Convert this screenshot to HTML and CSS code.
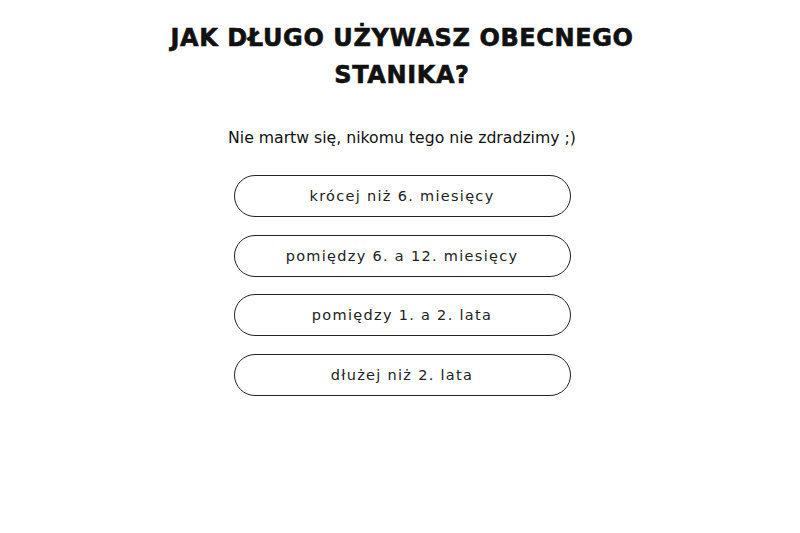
FILE: index.html
```html
<!DOCTYPE html>
<html lang="pl">
<head>
  <meta charset="UTF-8" />
  <meta name="viewport" content="width=device-width, initial-scale=1.0"/>
  <title>Quiz</title>
  <link rel="stylesheet" href="styles.css">
</head>
<body>
  <div class="question">
    <h2>JAK DŁUGO UŻYWASZ OBECNEGO<br>STANIKA?</h2>
    <p class="hint">Nie martw się, nikomu tego nie zdradzimy ;)</p>
    <div class="answers">
      <button class="answer">krócej niż 6. miesięcy</button>
      <button class="answer">pomiędzy 6. a 12. miesięcy</button>
      <button class="answer">pomiędzy 1. a 2. lata</button>
      <button class="answer">dłużej niż 2. lata</button>
    </div>
  </div>
</body>
</html>
```

FILE: styles.css
```css
body {
  font-family: 'DejaVu Sans', sans-serif;
  background: #fff;
  color: #111;
  margin: 0;
}
.question {
  width: 500px;
  margin: 0 auto;
  padding-top: 20px;
  text-align: center;
  transform: translateX(2px);
}
h2 {
  margin: 0;
  font-size: 24px;
  line-height: 37px;
  font-weight: 800;
  letter-spacing: 0.6px;
  -webkit-text-stroke: 0.6px #111;
}
.hint {
  margin: 34px 0 28px;
  font-size: 15.7px;
  letter-spacing: 0;
}
.answers {
  display: flex;
  flex-direction: column;
  align-items: center;
  gap: 17.5px;
}
.answer {
  width: 337px;
  height: 42px;
  background: #fff;
  border: 1px solid #222;
  border-radius: 21px;
  font-family: 'DejaVu Sans', sans-serif;
  font-size: 14.5px;
  letter-spacing: 1.3px;
  color: #222;
  cursor: pointer;
}
```
